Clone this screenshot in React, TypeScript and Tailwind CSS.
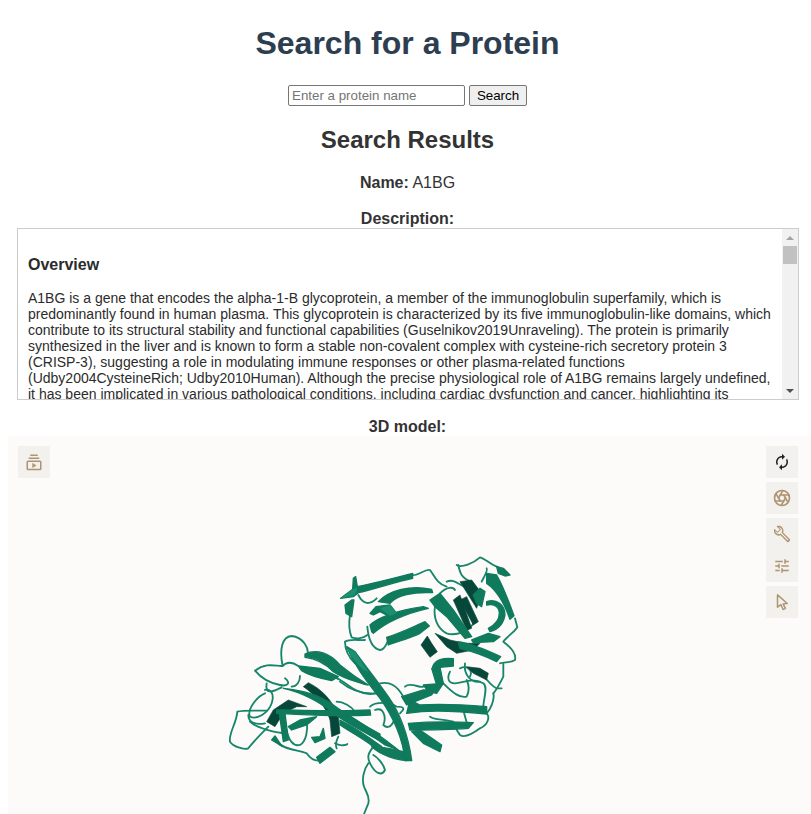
import React from 'react';
import { Aperture } from 'lucide-react';

const sheetsLeft = [
  'M255 312 C290 295 330 310 360 345 C390 370 420 390 445 405 L430 402 C400 392 370 385 340 365 C310 335 285 325 255 322Z',
  'M235 348 L300 355 L355 380 L335 392 C300 385 265 375 245 362Z',
  'M190 415 C240 425 300 455 340 490 C380 520 430 545 480 572 L480 552 C430 525 380 495 340 465 C300 435 240 420 190 415Z',
  'M170 480 C250 480 350 485 450 480 L452 495 C370 500 260 495 170 490Z',
  'M178 490 L195 490 L205 570 L190 575Z',
  'M205 530 L240 510 L290 500 L260 525 L215 540Z',
  'M275 562 L300 560 L310 535 L315 565 L285 578Z',
  'M290 622 L330 592 L345 605 L300 640Z',
  'M155 570 L165 558 L185 588Z',
];

const darkLeft = [
  'M250 410 L265 398 C300 415 340 450 355 500 L360 550 L335 560 L330 510 C320 470 280 430 250 410Z',
  'M140 515 L160 480 L205 450 L260 470 L230 470 L190 490 L165 530Z',
];

const sheetsRight = [
  'M2 145 L38 118 L40 85 L47 80 L52 110 C100 100 160 85 218 70 L218 85 C170 95 100 118 55 128 L40 140Z',
  'M15 165 L35 150 L42 150 L35 200 L18 190Z',
  'M20 290 L45 305 C70 340 110 390 145 440 C180 490 205 560 215 630 L195 632 C190 570 160 500 120 445 C90 405 50 360 20 290Z',
  'M95 590 C130 590 170 600 190 605 L215 632 C170 632 120 615 95 590Z',
  'M0 495 C40 520 90 550 135 585 L175 600 C125 560 60 515 0 480Z',
  'M0 525 C30 545 70 565 100 590 L125 590 C85 560 40 530 0 510Z',
  'M95 245 L90 225 C110 205 170 180 250 170 L265 175 C200 190 140 215 100 250Z',
  'M140 262 C180 250 220 230 255 215 L268 228 L240 250 C210 265 170 275 145 285Z',
  'M115 155 C150 120 210 105 275 118 L278 128 C220 125 170 135 150 160Z',
  'M90 190 L108 170 L150 165 L170 190 L150 200 L120 185 L100 195Z',
  'M270 150 L300 130 L340 180 L395 260 L375 265 L320 200 L285 170Z',
  'M355 275 C390 280 440 300 482 320 L470 335 C440 320 400 305 360 295Z',
  'M395 270 L445 250 L480 260 L460 275 L400 278Z',
  'M278 350 C285 330 310 322 340 326 L340 348 L300 352 L278 352Z',
  'M275 355 L300 352 L310 400 L290 405Z',
  'M250 405 L310 400 L290 430 L265 425Z',
  'M185 440 L250 420 L285 420 L275 435 L200 465Z',
  'M200 490 L210 450 L240 465 C310 460 380 465 440 470 L440 492 C370 485 300 480 245 485Z',
  'M205 520 C270 515 340 515 400 518 L385 535 C320 540 260 540 210 540Z',
  'M215 545 L240 540 L305 585 L300 605 L250 580Z',
  'M440 70 L470 75 C490 110 505 150 522 197 L510 208 C495 165 470 120 440 100Z',
  'M440 155 C470 145 495 165 495 195 C490 225 470 240 450 245 L445 235 C465 225 478 210 478 190 C478 170 460 160 440 165Z',
  'M400 135 L420 115 L435 125 L425 170 L410 160Z',
  'M470 50 L490 55 L510 75 L495 78 L475 70Z',
];

const darkRight = [
  'M243 285 L262 258 L275 280 L292 305 L270 322Z',
  'M285 250 L330 270 L375 280 L420 280 L400 300 L350 310 L320 290Z',
  'M340 150 L360 135 L395 235 L380 240Z',
  'M360 95 L395 90 L425 130 L410 175 L385 135Z',
  'M380 350 L420 355 L445 370 L440 390 L400 370Z',
  'M360 150 L380 140 L415 215 L400 225Z',
];

const highlights = [
  'M22 295 L45 305 C60 330 75 350 85 365 L70 360 C50 340 30 320 22 295Z',
  'M120 175 L150 165 L170 190 L150 198Z',
  'M2 145 L38 118 L52 112 L50 125 L40 138Z',
];

const loopsLeft = [
  'M262 315 C268 295 250 262 215 258 C185 260 178 300 188 348 C170 350 140 335 105 362 C120 380 140 398 180 405 C200 410 215 400 195 385',
  'M188 348 C200 335 215 335 235 348',
  'M140 400 C135 430 150 430 185 412 M215 410 C230 410 240 395 240 378',
  'M135 420 C150 415 165 430 155 460 C145 490 110 510 90 500 C80 480 110 440 135 430',
  'M140 482 C100 482 70 480 52 485 C50 520 25 550 30 575 C40 590 70 600 85 595 C100 575 130 545 145 530',
  'M85 495 C85 520 110 525 135 520',
  'M90 515 C110 535 170 550 200 550',
  'M170 575 C190 600 240 600 260 610 C270 625 285 632 295 632',
  'M200 540 C205 570 220 590 240 585 C258 575 265 540 260 515',
  'M350 455 C370 455 395 470 405 485',
  'M350 385 C380 395 400 430 450 432 C465 432 475 425 480 425',
  'M345 580 C360 590 380 585 382 582',
  'M350 595 C345 585 350 570 355 560',
];

const loopsRight = [
  'M350 45 C365 55 400 40 420 22 C435 25 445 40 470 50 L490 60',
  'M355 45 C360 70 365 85 395 95',
  'M440 55 C445 60 430 85 425 95',
  'M215 75 C235 80 255 55 270 60 C285 80 290 100 320 110',
  'M320 95 C345 85 355 105 375 110',
  'M300 130 C320 110 340 110 345 120',
  'M285 170 C280 200 290 235 320 250 C350 260 390 240 400 220',
  'M525 205 L532 232 C520 250 500 260 490 275 C510 290 530 310 525 330 C510 340 495 335 480 340',
  'M490 340 L490 380 C480 400 470 420 460 430',
  'M425 370 C440 390 455 410 470 415 L485 415',
  'M330 365 C320 385 325 400 345 400 C370 400 395 380 430 400 C445 410 430 450 430 470',
  'M375 340 C370 375 395 400 420 395',
  'M360 355 C380 345 400 360 390 380',
  'M310 400 C340 430 360 445 380 440 C390 420 385 400 380 390',
  'M120 400 C150 395 170 405 190 440',
  'M195 410 C210 395 240 415 250 410',
  'M460 430 C465 450 450 480 440 490 C450 500 445 525 420 535 C400 550 375 565 360 555 C350 540 345 535 350 530',
  'M370 480 C375 500 380 520 385 530',
  'M270 500 C280 510 300 505 340 515',
  'M90 470 C105 455 150 455 170 470 C200 470 190 480 180 490',
  'M105 480 C130 470 140 500 130 525 C150 545 170 510 160 490',
  'M100 590 C85 610 80 620 90 640 C105 670 125 680 135 660 C130 640 110 620 100 615',
  'M85 640 C70 660 65 690 72 710 C80 730 90 740 85 760 L72 792',
  'M30 195 C25 225 30 250 35 262 C50 268 70 265 82 255',
  'M15 275 C15 300 30 325 45 340',
  'M15 275 C30 265 60 272 75 270',
  'M82 230 C85 265 95 295 120 300 C135 300 140 280 145 270',
  'M55 135 C70 165 90 165 110 145',
  'M0 395 C30 420 70 435 120 430',
];

const Ribbons = ({ sheets, dark, loops, light = [] }: { sheets: string[]; dark: string[]; loops: string[]; light?: string[] }) => (
  <>
    <g fill="none" stroke="#17856a" strokeWidth={5.5} strokeLinecap="round" strokeLinejoin="round">
      {loops.map((d) => (
        <path key={d} d={d} />
      ))}
    </g>
    <g fill="#07473a" stroke="#07473a" strokeWidth={2} strokeLinejoin="round">
      {dark.map((d) => (
        <path key={d} d={d} />
      ))}
    </g>
    <g fill="#107a5d" stroke="#107a5d" strokeWidth={4} strokeLinejoin="round">
      {sheets.map((d) => (
        <path key={d} d={d} />
      ))}
    </g>
    {light.map((d) => (
      <path key={d} d={d} fill="#1a9070" />
    ))}
  </>
);

const Protein = () => (
  <svg className="absolute inset-0" width="803" height="378" viewBox="8 436 803 378">
    <g transform="translate(220 550) scale(0.3333)">
      <Ribbons sheets={sheetsLeft} dark={darkLeft} loops={loopsLeft} />
    </g>
    <g transform="translate(340 550) scale(0.3333)">
      <Ribbons sheets={sheetsRight} dark={darkRight} loops={loopsRight} light={highlights} />
    </g>
  </svg>
);

const MatIcon = ({ d, color = '#ae9471' }: { d: string; color?: string }) => (
  <svg width="18" height="18" viewBox="0 0 24 24" fill={color}>
    <path d={d} />
  </svg>
);

const ToolButton = ({ children }: { children: React.ReactNode }) => (
  <div className="w-8 h-8 flex items-center justify-center">{children}</div>
);

const Scrollbar = () => (
  <div className="w-[16px] shrink-0 bg-[#f1f1f1] flex flex-col items-center">
    <div className="h-[17px] flex items-center justify-center">
      <div className="w-0 h-0 border-x-[4px] border-b-[4px] border-x-transparent border-b-[#a3a3a3]" />
    </div>
    <div className="w-[14px] h-[18px] bg-[#c1c1c1]" />
    <div className="flex-1" />
    <div className="h-[17px] flex items-center justify-center">
      <div className="w-0 h-0 border-x-[4px] border-t-[4px] border-x-transparent border-t-[#505050]" />
    </div>
  </div>
);

export default function App() {
  return (
    <div className="w-[811px] h-[814px] overflow-hidden bg-white font-['Liberation_Sans',Arial,sans-serif] text-[#333]">
      <div className="ml-2 w-[799px] flex flex-col items-center">
        <h1 className="mt-[25px] h-[37px] text-[32px] leading-[37px] font-bold text-[#2c3e50]">Search for a Protein</h1>

        <div className="mt-[23px] flex items-center gap-[4px] h-[21px]">
          <input
            placeholder="Enter a protein name"
            className="w-[177px] h-[21px] px-[3px] border border-[#767676] rounded-[2px] text-[13.33px] text-black placeholder:text-[#757575] outline-none"
          />
          <button className="w-[58px] h-[21px] border border-[#767676] rounded-[2px] bg-[#efefef] text-[13.33px] text-black">
            Search
          </button>
        </div>

        <h2 className="mt-[20px] h-[28px] text-2xl leading-[28px] font-bold">Search Results</h2>

        <p className="mt-[20px] h-[18px] text-base leading-[18px]">
          <strong>Name:</strong> A1BG
        </p>

        <p className="mt-[18px] h-[18px] text-base leading-[18px] font-bold">Description:</p>

        <div className="ml-[9px] self-start w-[782px] h-[172px] border border-[#ccc] flex overflow-hidden">
          <div className="flex-1 overflow-hidden px-[10px] text-[#2b2b2b]">
            <h3 className="mt-[27px] text-base leading-[18px] font-bold">Overview</h3>
            <p className="mt-[16px] text-sm leading-[16px]">
              A1BG is a gene that encodes the alpha-1-B glycoprotein, a member of the immunoglobulin superfamily, which
              is predominantly found in human plasma. This glycoprotein is characterized by its five immunoglobulin-like
              domains, which contribute to its structural stability and functional capabilities
              (Guselnikov2019Unraveling). The protein is primarily synthesized in the liver and is known to form a stable
              non-covalent complex with cysteine-rich secretory protein 3 (CRISP-3), suggesting a role in modulating
              immune responses or other plasma-related functions (Udby2004CysteineRich; Udby2010Human). Although the
              precise physiological role of A1BG remains largely undefined, it has been implicated in various
              pathological conditions, including cardiac dysfunction and cancer, highlighting its
            </p>
          </div>
          <Scrollbar />
        </div>

        <p className="mt-[18px] h-[18px] text-base leading-[18px] font-bold">3D model:</p>

        <div className="relative self-start w-[803px] h-[378px] bg-[#fcfbf9]">
          <Protein />

          <div className="absolute left-[10px] top-[10px] bg-[#f3f1ee]">
            <ToolButton>
              <svg width="18" height="18" viewBox="0 0 24 24" fill="none" stroke="#ae9471" strokeWidth={2}>
                <path d="M7 3h10M5 7h14" />
                <rect x="3" y="11" width="18" height="11" rx="1" />
                <path d="M10 13.5v6l5-3z" fill="#ae9471" strokeWidth={0.5} />
              </svg>
            </ToolButton>
          </div>

          <div className="absolute left-[758px] top-[10px] flex flex-col gap-1">
            <div className="bg-[#f3f1ee]">
              <ToolButton>
                <MatIcon
                  color="#222"
                  d="M12 6v3l4-4-4-4v3c-4.42 0-8 3.58-8 8 0 1.57.46 3.03 1.24 4.26L6.7 14.8c-.45-.83-.7-1.79-.7-2.8 0-3.31 2.69-6 6-6zm6.76 1.74L17.3 9.2c.44.84.7 1.79.7 2.8 0 3.31-2.69 6-6 6v-3l-4 4 4 4v-3c4.42 0 8-3.58 8-8 0-1.57-.46-3.03-1.24-4.26z"
                />
              </ToolButton>
            </div>
            <div className="bg-[#f3f1ee]">
              <ToolButton>
                <Aperture size={18} color="#ae9471" strokeWidth={2.2} />
              </ToolButton>
            </div>
            <div className="bg-[#f3f1ee]">
              <ToolButton>
                <MatIcon d="m22.61 18.99-9.08-9.08c.93-2.34.45-5.1-1.44-7-1.99-1.99-4.99-2.4-7.39-1.29L9 6 6 9 1.9 4.91C.7 7.3 1.2 10.3 3.19 12.29c1.86 1.86 4.57 2.35 6.89 1.48l9.08 9.08c.39.39 1.03.39 1.42 0l2.03-2.03c.4-.39.4-1.03 0-1.42zm-3.02 1.71-9.45-9.45c-.61.45-1.29.72-2 .82-1.36.2-2.79-.21-3.83-1.25C3.34 9.87 2.9 8.77 2.92 7.7L6 10.78 10.78 6 7.7 2.92c1.07-.02 2.17.42 3.12 1.38 1.06 1.06 1.47 2.49 1.27 3.85-.11.71-.38 1.39-.82 2l9.44 9.44-1.12 1.11z" />
              </ToolButton>
              <ToolButton>
                <MatIcon d="M3 17v2h6v-2H3zM3 5v2h10V5H3zm10 16v-2h8v-2h-8v-2h-2v6h2zM7 9v2H3v2h4v2h2V9H7zm14 4v-2H11v2h10zm-6-4h2V7h4V5h-4V3h-2v6z" />
              </ToolButton>
            </div>
            <div className="bg-[#f3f1ee]">
              <ToolButton>
                <svg width="18" height="18" viewBox="0 0 24 24" fill="none" stroke="#ae9471" strokeWidth={2} strokeLinejoin="round">
                  <path d="M6 2.5 V19 L10.5 15.5 L13.5 22 L16.5 20.5 L13.5 14.5 L19 14Z" />
                </svg>
              </ToolButton>
            </div>
          </div>
        </div>
      </div>
    </div>
  );
}
